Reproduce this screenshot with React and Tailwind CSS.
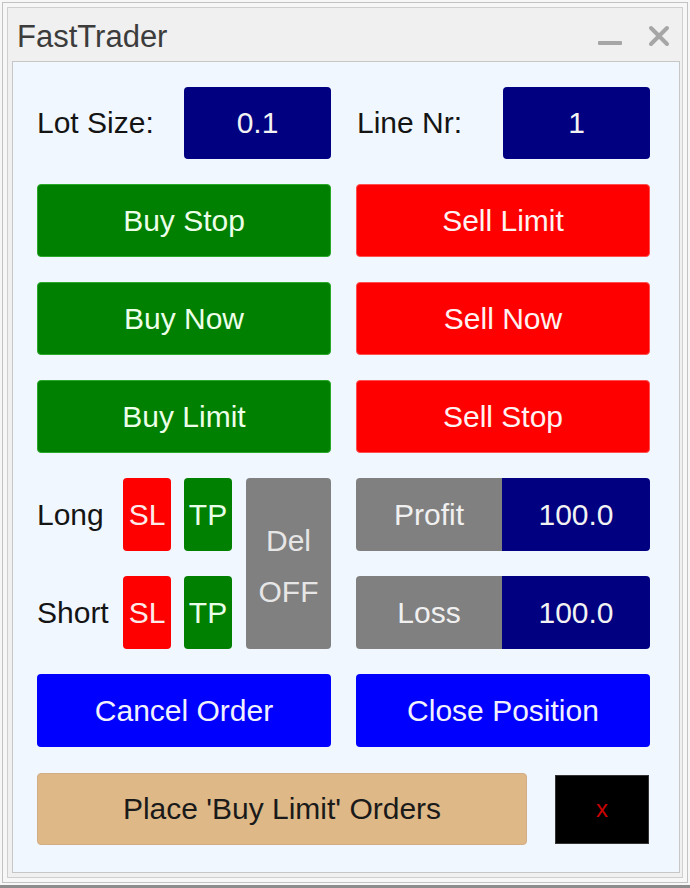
import React from 'react'

const font = "font-['Liberation_Sans',Arial,sans-serif]"

function Btn({ className, children }) {
  return (
    <div
      className={`flex items-center justify-center rounded-[4px] text-[30px] leading-none ${className}`}
    >
      {children}
    </div>
  )
}

export default function App() {
  return (
    <div className={`h-[888px] w-[690px] bg-[#8c8c8c] ${font}`}>
      {/* window frame */}
      <div className="h-[885px] bg-[#f7f7f7] px-[2px] pt-[2px] pb-[2px]">
        <div className="h-full border border-[#c2c2c2] p-[4px]">
          <div className="flex h-full flex-col border border-[#cfcfcf] bg-[#f0f0f0]">
            {/* title bar */}
            <div className="flex h-[53px] shrink-0 items-center pl-[9px] pr-[12px] pt-[3px]">
              <span className="text-[31px] leading-none text-[#3c3c3c]">FastTrader</span>
              <div className="ml-auto flex items-center gap-[26px]">
                <svg width="24" height="24" viewBox="0 0 24 24" className="mt-[6px]">
                  <rect x="0" y="14" width="24" height="4" rx="1" fill="#a6a6a6" />
                </svg>
                <svg width="22" height="22" viewBox="0 0 22 22">
                  <path d="M3 3 L19 19 M19 3 L3 19" stroke="#a6a6a6" strokeWidth="4" strokeLinecap="round" />
                </svg>
              </div>
            </div>

            {/* panel */}
            <div className="mb-[4px] ml-[4px] mr-[2px] flex-1 border border-[#c6c6c6] bg-[#f0f7ff] pl-[24px] pt-[24px]">
              <div className="grid w-[613px] grid-cols-[294px_294px] gap-x-[25px] gap-y-[25px]">
                {/* row 1 */}
                <div className="flex h-[73px] items-center">
                  <span className="w-[147px] text-[30px] leading-none text-[#141414]">Lot Size:</span>
                  <Btn className="h-[72px] w-[147px] bg-[#000080] text-[#f2f2f2]">0.1</Btn>
                </div>
                <div className="flex h-[73px] items-center">
                  <span className="w-[147px] pl-[1px] text-[30px] leading-none text-[#141414]">Line Nr:</span>
                  <Btn className="h-[72px] w-[147px] bg-[#000080] text-[#f2f2f2]">1</Btn>
                </div>

                {/* buy / sell */}
                <Btn className="h-[73px] border border-[#2aa82a] bg-[#008000] text-[#ecffe8]">Buy Stop</Btn>
                <Btn className="h-[73px] border border-[#ff5050] bg-[#ff0000] text-[#fff2f2]">Sell Limit</Btn>
                <Btn className="h-[73px] border border-[#2aa82a] bg-[#008000] text-[#ecffe8]">Buy Now</Btn>
                <Btn className="h-[73px] border border-[#ff5050] bg-[#ff0000] text-[#fff2f2]">Sell Now</Btn>
                <Btn className="h-[73px] border border-[#2aa82a] bg-[#008000] text-[#ecffe8]">Buy Limit</Btn>
                <Btn className="h-[73px] border border-[#ff5050] bg-[#ff0000] text-[#fff2f2]">Sell Stop</Btn>

                {/* SL / TP / Del */}
                <div className="flex h-[171px]">
                  <div className="flex flex-col gap-[25px]">
                    <div className="flex h-[73px] items-center">
                      <span className="w-[86px] text-[30px] leading-none text-[#141414]">Long</span>
                      <Btn className="h-[73px] w-[48px] bg-[#ff0000] text-[#ffeaea]">SL</Btn>
                      <Btn className="ml-[13px] h-[73px] w-[48px] bg-[#008000] text-[#e8ffe8]">TP</Btn>
                    </div>
                    <div className="flex h-[73px] items-center">
                      <span className="w-[86px] text-[30px] leading-none text-[#141414]">Short</span>
                      <Btn className="h-[73px] w-[48px] bg-[#ff0000] text-[#ffeaea]">SL</Btn>
                      <Btn className="ml-[13px] h-[73px] w-[48px] bg-[#008000] text-[#e8ffe8]">TP</Btn>
                    </div>
                  </div>
                  <div className="ml-[14px] flex h-[171px] w-[85px] flex-col items-center justify-center gap-[21px] rounded-[4px] bg-[#808080] pt-[6px] text-[30px] leading-none text-[#e6e6e6]">
                    <span>Del</span>
                    <span>OFF</span>
                  </div>
                </div>
                <div className="flex flex-col gap-[25px]">
                  <div className="flex h-[73px]">
                    <div className="flex w-[146px] items-center justify-center rounded-l-[4px] bg-[#808080] text-[30px] leading-none text-[#f0f0f0]">
                      Profit
                    </div>
                    <div className="flex flex-1 items-center justify-center rounded-r-[4px] bg-[#000080] text-[30px] leading-none text-[#f2f2f2]">
                      100.0
                    </div>
                  </div>
                  <div className="flex h-[73px]">
                    <div className="flex w-[146px] items-center justify-center rounded-l-[4px] bg-[#808080] text-[30px] leading-none text-[#f0f0f0]">
                      Loss
                    </div>
                    <div className="flex flex-1 items-center justify-center rounded-r-[4px] bg-[#000080] text-[30px] leading-none text-[#f2f2f2]">
                      100.0
                    </div>
                  </div>
                </div>

                {/* cancel / close */}
                <Btn className="h-[73px] bg-[#0000ff] text-[#f2f2ff]">Cancel Order</Btn>
                <Btn className="h-[73px] bg-[#0000ff] text-[#f2f2ff]">Close Position</Btn>
              </div>

              {/* place orders */}
              <div className="mt-[26px] flex items-center">
                <Btn className="h-[72px] w-[490px] border border-[#d2ad85] bg-[#deb887] text-[#1a1a1a]">
                  Place 'Buy Limit' Orders
                </Btn>
                <div className="ml-[28px] flex h-[69px] w-[94px] items-center justify-center border border-[#333] bg-black text-[24px] leading-none text-[#c80000]">
                  x
                </div>
              </div>
            </div>
          </div>
        </div>
      </div>
    </div>
  )
}
